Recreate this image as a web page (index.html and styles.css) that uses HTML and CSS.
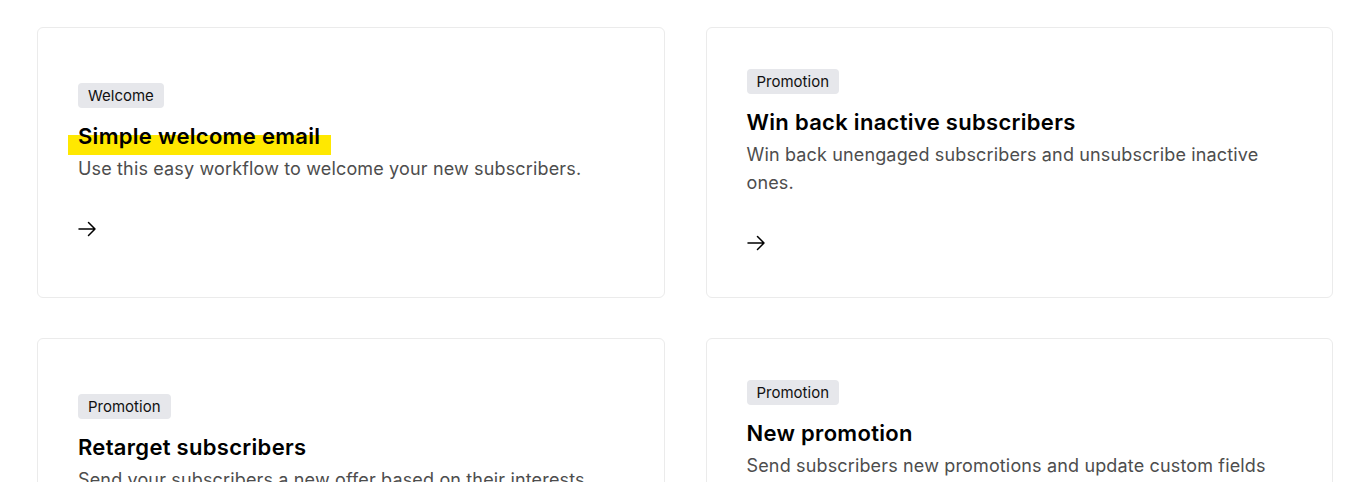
FILE: index.html
```html
<!DOCTYPE html>
<html lang="en">
<head>
    <meta charset="UTF-8">
    <title>Workflow templates</title>
    <link rel="stylesheet" href="styles.css">
</head>
<body>

    <div class="templates">
        <a class="card" href="#">
            <span class="tag">Welcome</span>
            <h3 class="title"><span class="marker">Simple welcome email</span></h3>
            <p class="desc">Use this easy workflow to welcome your new subscribers.</p>
            <svg class="arrow" width="20" height="20" viewBox="0 0 20 20" fill="none" stroke="currentColor" stroke-width="1.5" stroke-linecap="round" stroke-linejoin="round">
                <path d="M2 10h16M11.5 3.5l6.5 6.5-6.5 6.5"/>
            </svg>
        </a>

        <a class="card" href="#">
            <span class="tag">Promotion</span>
            <h3 class="title">Win back inactive subscribers</h3>
            <p class="desc">Win back unengaged subscribers and unsubscribe inactive ones.</p>
            <svg class="arrow" width="20" height="20" viewBox="0 0 20 20" fill="none" stroke="currentColor" stroke-width="1.5" stroke-linecap="round" stroke-linejoin="round">
                <path d="M2 10h16M11.5 3.5l6.5 6.5-6.5 6.5"/>
            </svg>
        </a>

        <a class="card" href="#">
            <span class="tag">Promotion</span>
            <h3 class="title">Retarget subscribers</h3>
            <p class="desc">Send your subscribers a new offer based on their interests.</p>
            <svg class="arrow" width="20" height="20" viewBox="0 0 20 20" fill="none" stroke="currentColor" stroke-width="1.5" stroke-linecap="round" stroke-linejoin="round">
                <path d="M2 10h16M11.5 3.5l6.5 6.5-6.5 6.5"/>
            </svg>
        </a>

        <a class="card" href="#">
            <span class="tag">Promotion</span>
            <h3 class="title">New promotion</h3>
            <p class="desc">Send subscribers new promotions and update custom fields based on their clicks.</p>
            <svg class="arrow" width="20" height="20" viewBox="0 0 20 20" fill="none" stroke="currentColor" stroke-width="1.5" stroke-linecap="round" stroke-linejoin="round">
                <path d="M2 10h16M11.5 3.5l6.5 6.5-6.5 6.5"/>
            </svg>
        </a>
    </div>

</body>
</html>
```

FILE: styles.css
```css
body {
    margin: 0;
    font-family: Inter, "Noto Sans", sans-serif;
    color: #000;
    background: #fff;
}
.templates {
    display: grid;
    grid-template-columns: 1fr 1fr;
    gap: 40px 41px;
    padding: 27px 27px 0 37px;
}
.card {
    display: flex;
    flex-direction: column;
    justify-content: center;
    align-items: flex-start;
    min-height: 271px;
    box-sizing: border-box;
    padding: 38px 40px 42px;
    border: 1px solid #ebebeb;
    border-radius: 6px;
    text-decoration: none;
    color: #000;
}
.tag {
    display: inline-block;
    background: #e6e7eb;
    border-radius: 4px;
    padding: 0 10px;
    font-size: 15px;
    line-height: 25px;
    color: #111;
}
.title {
    margin: 13px 0 4px;
    font-size: 22px;
    line-height: 30px;
    font-weight: 600;
    letter-spacing: 0.3px;
}
.marker {
    position: relative;
    z-index: 0;
}
.marker::before {
    content: "";
    position: absolute;
    z-index: -1;
    left: -10px;
    right: -11px;
    top: 12px;
    height: 20px;
    background: #ffe800;
}
.desc {
    margin: 0;
    font-size: 18px;
    line-height: 28px;
    letter-spacing: 0.15px;
    color: #4d4d4d;
}
.arrow {
    margin-top: 36px;
    margin-left: -1px;
}
```
